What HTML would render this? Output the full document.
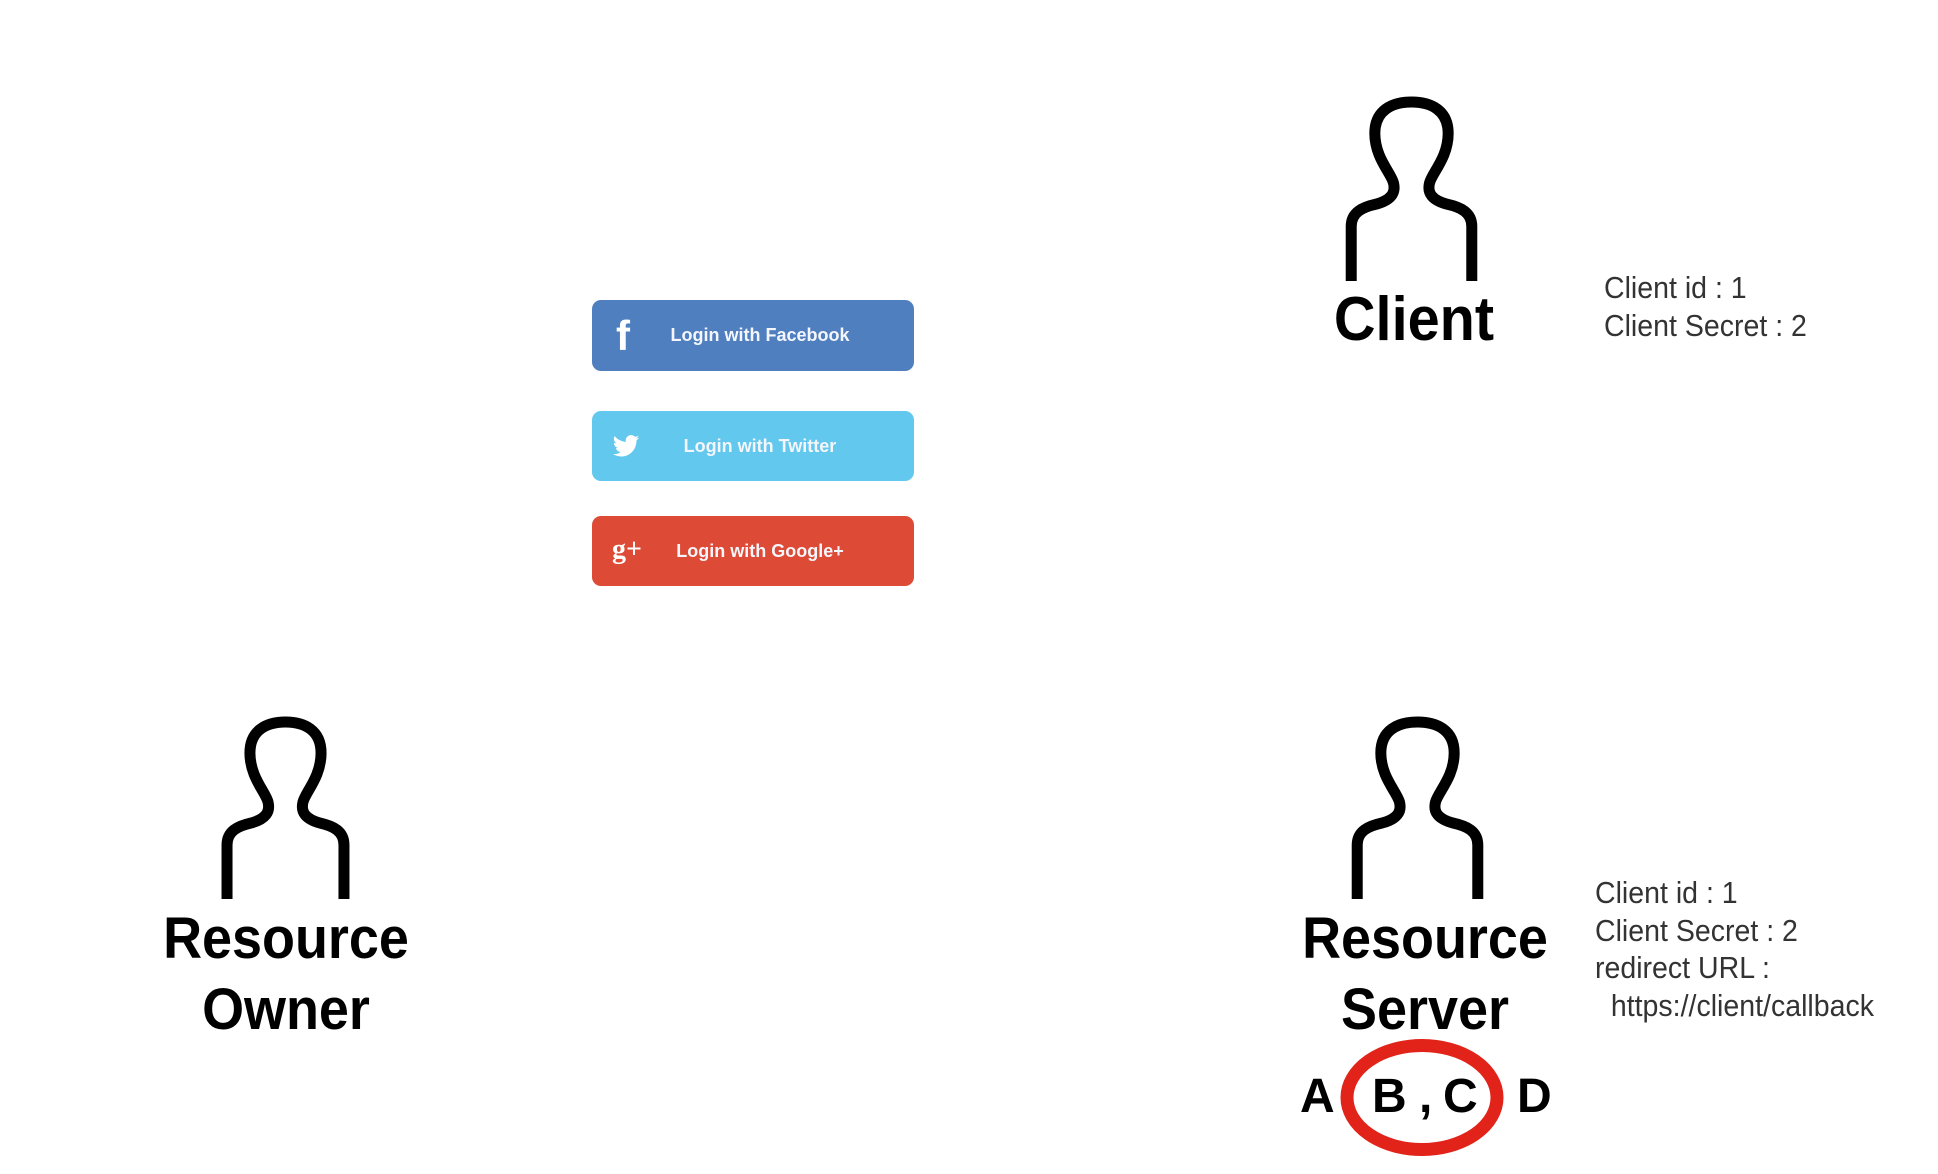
<!DOCTYPE html>
<html><head><meta charset="utf-8"><style>
body{margin:0;width:1938px;height:1174px;background:#fff;position:relative;overflow:hidden;font-family:"Liberation Sans",sans-serif}
.btn{position:absolute;left:592px;width:322px;height:71px;border-radius:9px;color:#f4f6fb;font-weight:bold;font-size:18px;line-height:71px}
.btn span{position:absolute;left:0;right:0;text-align:center}
.lab{position:absolute;font-weight:bold;font-size:58px;color:#000;text-align:center;transform:scaleX(0.93);transform-origin:center;white-space:nowrap;line-height:1}
.info{position:absolute;font-size:31px;color:#333;line-height:37.5px;transform:scaleX(0.92);transform-origin:left;white-space:nowrap}
svg.p{position:absolute;overflow:visible}
.l{position:absolute;font-weight:bold;font-size:48px;line-height:1;color:#000}
</style></head><body>
<div class="btn" style="top:300px;background:#4f7fbf"><span style="left:14px">Login with Facebook</span>
<div style="position:absolute;left:24px;top:0;font-size:42px;color:#fff">f</div></div>
<div class="btn" style="top:411px;height:70px;background:#63c8ed"><span style="left:14px">Login with Twitter</span>
<svg style="position:absolute;left:20px;top:24px" width="28" height="22" viewBox="0 0 24 20"><path fill="#fff" d="M24 2.4c-.9.4-1.8.7-2.8.8 1-.6 1.8-1.6 2.2-2.7-1 .6-2 1-3.1 1.2A4.9 4.9 0 0 0 11.9 6.2 14 14 0 0 1 1.7 1a4.9 4.9 0 0 0 1.5 6.6c-.8 0-1.6-.3-2.2-.6 0 2.4 1.700 4.4 3.9 4.8-.7.2-1.5.2-2.2.1a4.9 4.9 0 0 0 4.6 3.4A9.9 9.9 0 0 1 0 17.3 14 14 0 0 0 7.5 19.5c9.1 0 14-7.5 14-14v-.6c1-.7 1.8-1.6 2.5-2.5z"/></svg></div>
<div class="btn" style="top:516px;height:70px;background:#dd4a35"><span style="left:14px">Login with Google+</span>
<div style="position:absolute;left:20px;top:-2px;font-size:28px;font-family:'Liberation Serif';color:#fff">g+</div></div>

<svg class="p" style="left:1345px;top:97px" width="133" height="184" viewBox="0 0 107 182" preserveAspectRatio="none"><path id="pp" fill="none" stroke="#000" stroke-width="11" vector-effect="non-scaling-stroke" d="M5,182 L5,128 C5,114 14,109 25,106 C37,102 41,95 39,85 C37,75 24,60 24,36 C24,13 38,5 53.5,5 C69,5 83,13 83,36 C83,60 70,75 68,85 C66,95 70,102 82,106 C93,109 102,114 102,128 L102,182"/></svg>
<svg class="p" style="left:1351px;top:717px" width="133" height="182" viewBox="0 0 107 182" preserveAspectRatio="none"><use href="#pp"/></svg>
<svg class="p" style="left:221px;top:717px" width="129" height="182" viewBox="0 0 107 182" preserveAspectRatio="none"><use href="#pp"/></svg>

<div class="lab" style="left:1264px;width:300px;top:289px;font-size:62px">Client</div>
<div class="info" style="left:1604px;top:269px">Client id : 1<br>Client Secret : 2</div>

<div class="lab" style="left:136px;width:300px;top:910px">Resource</div>
<div class="lab" style="left:136px;width:300px;top:981px">Owner</div>

<div class="lab" style="left:1275px;width:300px;top:910px">Resource</div>
<div class="lab" style="left:1275px;width:300px;top:981px">Server</div>
<svg class="p" style="left:1340px;top:1039px" width="164" height="117"><ellipse cx="82" cy="58.5" rx="75" ry="52" fill="none" stroke="#e2231a" stroke-width="13"/></svg>
<div class="l" style="left:1300px;top:1073px">A</div>
<div class="l" style="left:1372px;top:1073px">B</div>
<div class="l" style="left:1419px;top:1073px">,</div>
<div class="l" style="left:1443px;top:1073px">C</div>
<div class="l" style="left:1517px;top:1073px">D</div>

<div class="info" style="left:1595px;top:874px">Client id : 1<br>Client Secret : 2<br>redirect URL :<br>&nbsp;&nbsp;https://client/callback</div>
</body></html>
